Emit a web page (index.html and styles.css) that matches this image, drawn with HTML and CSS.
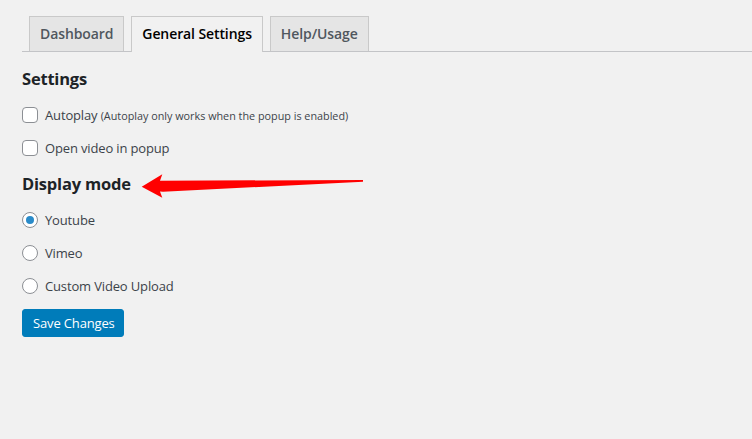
FILE: index.html
```html
<!DOCTYPE html>
<html>
<head>
<meta charset="utf-8">
<link rel="stylesheet" href="styles.css">
</head>
<body>
<div class="page">
  <nav class="tabs">
    <a class="tab">Dashboard</a>
    <a class="tab active">General Settings</a>
    <a class="tab">Help/Usage</a>
  </nav>
  <h2 class="heading first">Settings</h2>
  <label class="row"><span class="check"></span><span>Autoplay <small>(Autoplay only works when the popup is enabled)</small></span></label>
  <label class="row"><span class="check"></span><span>Open video in popup</span></label>
  <h2 class="heading">Display mode</h2>
  <label class="row"><span class="radio on"></span><span>Youtube</span></label>
  <label class="row"><span class="radio"></span><span>Vimeo</span></label>
  <label class="row"><span class="radio"></span><span>Custom Video Upload</span></label>
  <div class="actions"><button class="btn">Save Changes</button></div>
  <svg class="arrow" width="250" height="40" viewBox="0 0 250 40">
    <polygon fill="#ff0000" points="11.7,21.7 32.3,9.3 30,15.7 233,15 233,16.7 33,26.7 30,26.5 32.3,32.7"/>
  </svg>
</div>
</body>
</html>
```
FILE: styles.css
```css
html, body {
  margin: 0;
  padding: 0;
  background: #f1f1f1;
}
body {
  font-family: "Open Sans", "Noto Sans", sans-serif;
  font-size: 13px;
  color: #3c434a;
  width: 752px;
  height: 439px;
  overflow: hidden;
}
.page {
  position: relative;
  padding: 16px 0 0 22px;
}
.tabs {
  display: flex;
  border-bottom: 1px solid #c3c4c7;
  height: 35px;
}
.tab {
  display: block;
  margin-left: 7px;
  padding: 0 10px;
  height: 35px;
  line-height: 34px;
  box-sizing: border-box;
  border: 1px solid #c9c9c9;
  border-bottom: none;
  background: #e5e5e5;
  color: #50575e;
  font-size: 14px;
  font-weight: 600;
  letter-spacing: -0.1px;
}
.tab.active {
  background: #f1f1f1;
  color: #000;
  height: 36px;
  margin-bottom: -1px;
}
.heading {
  margin: 8px 0 7px;
  height: 24px;
  line-height: 24px;
  font-size: 16.5px;
  font-weight: 700;
  letter-spacing: -0.2px;
  color: #1d2327;
}
.heading.first {
  margin-top: 15px;
}
.row {
  display: flex;
  align-items: center;
  gap: 7px;
  height: 33px;
  color: #3c434a;
  letter-spacing: -0.15px;
}
.row small {
  font-size: 10.8px;
  letter-spacing: 0;
}
.check {
  width: 16px;
  height: 16px;
  box-sizing: border-box;
  border: 1px solid #8c8f94;
  border-radius: 4px;
  background: #fff;
  flex: none;
}
.radio {
  width: 16px;
  height: 16px;
  box-sizing: border-box;
  border: 1px solid #8c8f94;
  border-radius: 50%;
  background: #fff;
  display: flex;
  align-items: center;
  justify-content: center;
  flex: none;
}
.radio.on::after {
  content: "";
  width: 8px;
  height: 8px;
  border-radius: 50%;
  background: #2a8bc9;
}
.actions {
  padding-top: 7px;
}
.btn {
  height: 28px;
  padding: 0 10px;
  background: #007cba;
  border: 1px solid #007cba;
  border-radius: 3px;
  color: #fff;
  font-family: inherit;
  font-size: 13px;
  white-space: nowrap;
  width: 102px;
  letter-spacing: -0.15px;
}
.arrow {
  position: absolute;
  left: 130px;
  top: 165px;
}
```
